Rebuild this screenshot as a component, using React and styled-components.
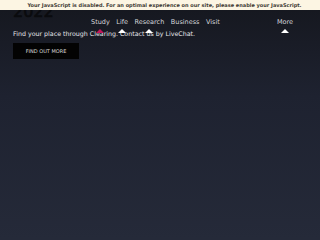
import styled, { createGlobalStyle } from "styled-components";

const GlobalStyle = createGlobalStyle`
  html, body {
    margin: 0;
    padding: 0;
  }
  body {
    font-family: "DejaVu Sans", Verdana, sans-serif;
    background: #16181f;
  }
`;

const Banner = styled.div`
  position: fixed;
  top: 0;
  left: 0;
  right: 0;
  height: 10px;
  z-index: 10;
  padding-left: 9px;
  background: #fcf5e3;
  color: #3e3a33;
  font-size: 5px;
  font-weight: bold;
  line-height: 10px;
  text-align: center;
  white-space: nowrap;
`;

const Page = styled.div`
  position: relative;
  min-height: 240px;
  background: linear-gradient(180deg, #15171e 0%, #1e2230 40%, #252a39 100%);
  padding: 0 13px;
  box-sizing: border-box;
`;

const Year = styled.h1`
  margin: 0;
  padding-top: 4px;
  font-size: 16px;
  line-height: 16px;
  font-weight: normal;
  color: #0a0b0e;
  -webkit-text-stroke: 0.6px #0a0b0e;
`;

const Lead = styled.p`
  margin: 9px 0 0;
  font-size: 6.3px;
  line-height: 9px;
  color: #e6e7ea;
`;

const CtaButton = styled.a`
  display: flex;
  align-items: center;
  justify-content: center;
  width: 66px;
  height: 16px;
  margin-top: 5px;
  background: #030303;
  color: #dcdcdc;
  font-size: 5px;
  text-transform: uppercase;
  text-decoration: none;
`;

const Nav = styled.nav`
  position: absolute;
  top: 18px;
  left: 91px;
  right: 27px;
  display: flex;
  gap: 6.5px;
`;

const NavItem = styled.div`
  position: relative;
  font-size: 6.5px;
  line-height: 9px;
  color: #d4d6dc;
  margin-left: ${(p) => (p.$push ? "auto" : "0")};
`;

const Caret = styled.span`
  position: absolute;
  top: 11px;
  left: 50%;
  transform: translateX(-50%);
  width: 0;
  height: 0;
  border-left: 4px solid transparent;
  border-right: 4px solid transparent;
  border-bottom: 4px solid ${(p) => (p.$active ? "#c2165b" : "#ffffff")};
`;

const items = [
  { label: "Study", caret: true, active: true },
  { label: "Life", caret: true },
  { label: "Research", caret: true },
  { label: "Business" },
  { label: "Visit" },
  { label: "More", caret: true, push: true },
];

export default function App() {
  return (
    <>
      <GlobalStyle />
      <Banner>
        Your JavaScript is disabled. For an optimal experience on our site, please enable your JavaScript.
      </Banner>
      <Page>
        <Year>2022</Year>
        <Lead>Find your place through Clearing. Contact us by LiveChat.</Lead>
        <CtaButton href="#">Find out more</CtaButton>
        <Nav>
          {items.map((item) => (
            <NavItem key={item.label} $push={item.push}>
              {item.label}
              {item.caret && <Caret $active={item.active} />}
            </NavItem>
          ))}
        </Nav>
      </Page>
    </>
  );
}
